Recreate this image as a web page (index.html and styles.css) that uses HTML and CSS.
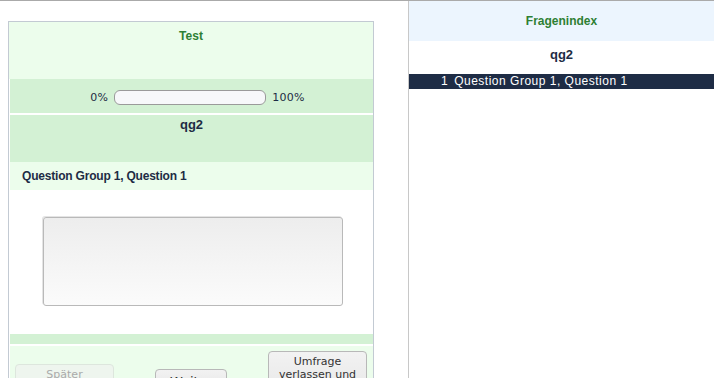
FILE: index.html
```html
<!DOCTYPE html>
<html lang="de">
<head>
  <meta charset="UTF-8" />
  <title>Test</title>
  <link rel="stylesheet" href="styles.css">
</head>
<body>
  <div class="page">
    <div class="survey-col">
      <div class="survey">
        <div class="survey-title">Test</div>
        <div class="progress-row">
          <span>0%</span>
          <div class="progress-bar"></div>
          <span>100%</span>
        </div>
        <div class="group-title">qg2</div>
        <div class="question-text">Question Group 1, Question 1</div>
        <div class="answer-area">
          <textarea class="answer-field"></textarea>
        </div>
        <div class="help-bar"></div>
        <div class="nav-row">
          <button class="nav-btn btn-later" disabled>Später<br>fortfahren</button>
          <button class="nav-btn btn-next">Weiter</button>
          <button class="nav-btn btn-quit">Umfrage<br>verlassen und<br>Antworten<br>löschen</button>
        </div>
      </div>
    </div>

    <div class="index-col">
      <div class="index-header">Fragenindex</div>
      <div class="index-group">qg2</div>
      <div class="index-item current">
        <span class="index-num">1</span>
        <span>Question Group 1, Question 1</span>
      </div>
    </div>
  </div>
</body>
</html>
```

FILE: styles.css
```css
* {
  margin: 0;
  padding: 0;
  box-sizing: border-box;
}

body {
  font-family: 'Liberation Sans', Arial, sans-serif;
  font-size: 12px;
  color: #1e2c45;
  background: #fff;
  border-top: 1px solid #aaaaaa;
  height: 100vh;
  overflow: hidden;
}

.page {
  display: flex;
  height: 100%;
}

.survey-col {
  width: 408px;
  padding: 20px 0 0 8px;
}

.survey {
  width: 366px;
  border: 1px solid #c3cad3;
  background: #fff;
}

.survey-title {
  height: 57px;
  padding-top: 7px;
  background: #ecfdec;
  color: #2e8034;
  font-weight: 700;
  text-align: center;
}

.progress-row {
  margin-left: 1px;
  height: 34px;
  background: #d3f1d4;
  display: flex;
  align-items: center;
  justify-content: center;
  gap: 6px;
  padding: 2px 0 0 12px;
  font-family: 'DejaVu Sans', sans-serif;
  font-size: 11px;
  letter-spacing: 0.3px;
}

.progress-bar {
  width: 152px;
  height: 15px;
  border: 1px solid #9a9a9a;
  border-radius: 6px;
  background: #f7f8fa;
}

.group-title {
  margin: 2px 0 0 1px;
  height: 47px;
  padding-top: 2px;
  background: #d3f1d4;
  font-size: 13px;
  font-weight: 700;
  text-align: center;
}

.question-text {
  margin-left: 1px;
  height: 28px;
  padding: 7px 0 0 12px;
  background: #ecfdec;
  font-weight: 700;
  letter-spacing: -0.2px;
}

.answer-area {
  height: 144px;
  padding: 27px 0 0 34px;
}

.answer-field {
  display: block;
  width: 300px;
  height: 89px;
  border: 1px solid #b9b9b9;
  border-radius: 3px;
  background: linear-gradient(#ededed, #fbfbfb);
  box-shadow: -1px -1px 0 #e4e4e4;
  resize: none;
}

.help-bar {
  margin-left: 1px;
  height: 10px;
  background: #d3f1d4;
}

.nav-row {
  margin: 2px 0 0 1px;
  height: 70px;
  background: #ecfdec;
  display: flex;
  align-items: center;
}

.nav-btn {
  font-family: 'DejaVu Sans', sans-serif;
  font-size: 11px;
  line-height: 13px;
  color: #333;
  padding: 3px 4px;
  border: 1px solid #b8b8b8;
  border-radius: 4px;
  background: linear-gradient(#f2f2f2, #e4e4e4);
  text-align: center;
}

.btn-later {
  margin-left: 5px;
  width: 99px;
  color: #aaaaaa;
  border-color: #dde6dd;
  background: #eef5ee;
}

.btn-next {
  margin-left: 41px;
  width: 72px;
  font-size: 13px;
  line-height: 15px;
  padding: 4px 6px;
}

.btn-quit {
  margin-left: 41px;
  width: 99px;
}

.index-col {
  flex: 1;
  border-left: 1px solid #c8c8c8;
}

.index-header {
  height: 40px;
  padding-top: 13px;
  background: #ecf5fe;
  color: #2e8034;
  font-weight: 700;
  text-align: center;
}

.index-group {
  height: 33px;
  padding-top: 6px;
  font-size: 13px;
  font-weight: 700;
  text-align: center;
}

.index-item {
  height: 15px;
  padding-left: 32px;
  font-size: 12px;
  line-height: 15px;
  letter-spacing: 0.5px;
  display: flex;
  gap: 6px;
}

.index-item.current {
  background: #1e2c45;
  color: #fff;
}
```
